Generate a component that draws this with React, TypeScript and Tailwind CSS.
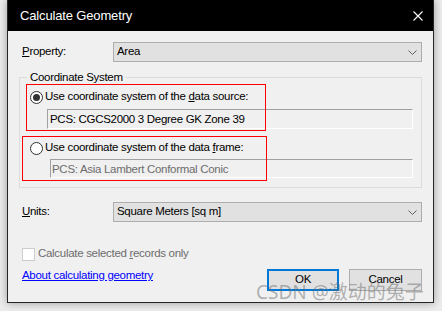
export default function App() {
  return (
    <div className="relative h-[311px] w-[442px] overflow-hidden bg-[#ececec] pl-[7px] pr-[8px] pb-[8px] font-['Liberation_Sans',sans-serif] text-[11.5px] tracking-[-0.3px] text-black">
      <div className="flex h-[303px] flex-col border border-t-0 border-[#262626] bg-[#f0f0f0] shadow-[0_0_8px_rgba(0,0,0,0.35)]">
        {/* title bar */}
        <div className="flex h-[31px] shrink-0 items-center justify-between bg-black pl-[12px] pr-[10px] text-[13px] tracking-[-0.15px] text-white">
          <span>Calculate Geometry</span>
          <svg width="10" height="10" viewBox="0 0 10 10" className="text-white">
            <path d="M0.5 0.5L9.5 9.5M9.5 0.5L0.5 9.5" stroke="currentColor" strokeWidth="1.1" />
          </svg>
        </div>

        <div className="flex flex-col px-[11px]">
          {/* property */}
          <div className="mt-[11px] flex h-[20px] items-center">
            <span className="w-[94px] pl-[3px]">
              <span className="underline">P</span>roperty:
            </span>
            <Dropdown value="Area" />
          </div>

          {/* coordinate system group */}
          <fieldset className="mt-[7px] border border-[#dcdcdc] pb-[9px] pl-[10px] pr-[8px] pt-[4px]">
            <legend className="-ml-[3px] px-[3px] leading-[16px]">Coordinate System</legend>
            <Radio checked>
              Use coordinate system of the <span className="underline">d</span>ata source:
            </Radio>
            <div className="ml-[17px] mt-[4px] flex h-[20px] items-center border border-b-white border-l-[#a0a0a0] border-r-white border-t-[#a0a0a0] pl-[2px] leading-[16px]">
              PCS: CGCS2000 3 Degree GK Zone 39
            </div>
            <div className="mt-[11px]">
              <Radio>
                Use coordinate system of the data <span className="underline">f</span>rame:
              </Radio>
            </div>
            <div className="ml-[20px] mt-[3px] flex h-[19px] items-center border border-b-white border-l-[#a0a0a0] border-r-white border-t-[#a0a0a0] pl-[1px] leading-[16px] text-[#6d6d6d]">
              PCS: Asia Lambert Conformal Conic
            </div>
          </fieldset>

          {/* units */}
          <div className="mt-[14px] flex h-[20px] items-center">
            <span className="w-[94px] pl-[3px]">
              <span className="underline">U</span>nits:
            </span>
            <Dropdown value="Square Meters [sq m]" />
          </div>

          {/* selected only */}
          <div className="mt-[24px] flex h-[16px] items-center gap-[3px] pl-[3px] text-[#6d6d6d]">
            <span className="h-[13px] w-[13px] border border-[#cccccc] bg-white" />
            <span>
              Calculate selected <span className="underline">r</span>ecords only
            </span>
          </div>

          {/* bottom row */}
          <div className="mt-[7px] flex items-start justify-between">
            <span className="-mt-[2px] pl-[3px] leading-[16px] text-[#0000ff] underline">About calculating geometry</span>
            <div className="flex gap-[10px]">
              <button className="flex h-[22px] w-[72px] items-center justify-center border-2 border-[#0078d7] bg-[#e1e1e1]">OK</button>
              <button className="flex h-[22px] w-[73px] items-center justify-center border border-[#adadad] bg-[#e1e1e1]">Cancel</button>
            </div>
          </div>
        </div>
      </div>

      {/* annotation boxes */}
      <div className="pointer-events-none absolute left-[26px] top-[84px] h-[47px] w-[240px] border border-[#ff0000]" />
      <div className="pointer-events-none absolute left-[22px] top-[136px] h-[45px] w-[245px] border border-[#ff0000]" />

      {/* watermark */}
      <div className="pointer-events-none absolute left-[256px] top-[280px] whitespace-nowrap font-['Noto_Sans','Noto_Sans_CJK_SC',sans-serif] text-[19px] leading-[24px] tracking-normal text-[rgba(110,110,110,0.5)]">
        CSDN @激动的兔子
      </div>
    </div>
  );
}

function Dropdown({ value }: { value: string }) {
  return (
    <div className="flex h-[20px] flex-1 items-center justify-between border border-[#adadad] bg-[#e1e1e1] pl-[3px] pr-[4px]">
      <span>{value}</span>
      <svg width="9" height="5" viewBox="0 0 9 5">
        <path d="M0.5 0.5L4.5 4.5L8.5 0.5" fill="none" stroke="#606060" strokeWidth="1" />
      </svg>
    </div>
  );
}

function Radio({ checked = false, children }: { checked?: boolean; children: React.ReactNode }) {
  return (
    <div className="flex h-[16px] items-center gap-[2px]">
      <span className="flex h-[13px] w-[13px] items-center justify-center rounded-full border border-[#333333] bg-white">
        {checked && <span className="h-[7px] w-[7px] rounded-full bg-[#333333]" />}
      </span>
      <span>{children}</span>
    </div>
  );
}
